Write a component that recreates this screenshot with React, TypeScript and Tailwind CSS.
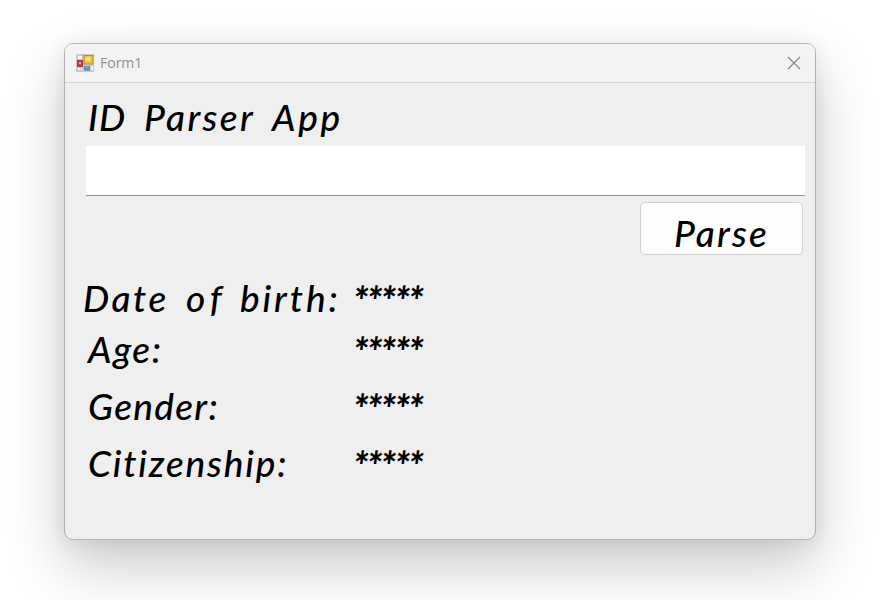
import React from 'react';

type Word = { text: string; style: string };
type Field = { words: Word[]; row: string };

const title: Word[] = [
  { text: 'ID', style: 'w-[56px] tracking-[1px]' },
  { text: 'Parser', style: 'w-[128px] tracking-[2.4px]' },
  { text: 'App', style: 'tracking-[2.6px]' },
];

const fields: Field[] = [
  {
    row: 'h-[51px]',
    words: [
      { text: 'Date', style: 'ml-[-5px] w-[103px] tracking-[2.6px]' },
      { text: 'of', style: 'w-[54px] tracking-[5px]' },
      { text: 'birth:', style: 'tracking-[2.9px]' },
    ],
  },
  { row: 'h-[57px]', words: [{ text: 'Age:', style: 'tracking-[1.6px]' }] },
  { row: 'h-[57px]', words: [{ text: 'Gender:', style: 'tracking-[1.3px]' }] },
  { row: 'h-[56px]', words: [{ text: 'Citizenship:', style: 'tracking-[1.8px]' }] },
];

function Words({ words }: { words: Word[] }) {
  return (
    <>
      {words.map(({ text, style }) => (
        <span key={text} className={`inline-block ${style}`}>{text}</span>
      ))}
    </>
  );
}

function FormIcon() {
  return (
    <svg width="18" height="18" viewBox="0 0 18 18" className="shrink-0">
      <rect width="18" height="18" rx="1" fill="#cbcbcb" />
      <path d="M2 2h4v3H2zM2 14h2v2H2zM5 14h1v2H5zM15 12h2v4h-2z" fill="#f5f5f5" />
      <rect x="1.5" y="6.5" width="5" height="6" fill="#c04a40" stroke="#a8352d" />
      <rect x="3" y="8" width="2" height="2" fill="#e5a39c" />
      <rect x="8" y="1.5" width="9" height="8.5" fill="#f0c23a" stroke="#b48f25" />
      <rect x="9.5" y="3" width="5" height="4" fill="#fbdc78" />
      <rect x="8" y="12" width="6" height="4.5" fill="#5183d6" />
      <rect x="9" y="12.5" width="4" height="2" fill="#7ba6ec" />
    </svg>
  );
}

function Star() {
  return <span className="inline-block w-[13.8px]">*</span>;
}

export default function App() {
  return (
    <div className="h-[600px] w-[893px] overflow-hidden bg-white pt-[43px] pl-[64px] font-['Lato',sans-serif] text-black">
      <main className="flex h-[497px] w-[752px] flex-col overflow-hidden rounded-[9px] border border-[#b2b2b2] bg-[#efefef] shadow-[0_26px_58px_rgba(0,0,0,0.21),0_2px_20px_rgba(0,0,0,0.08)]">
        <header className="flex h-[39px] shrink-0 items-center border-b border-[#d3d3d3] bg-[#f3f3f3] pr-[14px] pl-[11px]">
          <FormIcon />
          <span className="ml-[6px] flex-1 font-['Open_Sans',sans-serif] text-[14px] leading-[20px] text-[#8e8e8e]">Form1</span>
          <svg width="14" height="14" viewBox="0 0 14 14" fill="none" stroke="#858585" strokeWidth="1.1">
            <path d="M1 1l12 12M13 1L1 13" />
          </svg>
        </header>
        <div className="flex flex-col pr-[9px] pl-[21px]">
          <h1 className="flex h-[63px] items-start pt-[11px] pl-[2px] text-[37px] leading-[46px] font-medium whitespace-nowrap italic">
            <Words words={title} />
          </h1>
          <input aria-label="ID" className="h-[50px] w-[719px] border-b border-[#929292] bg-white px-2 outline-none" />
          <button className="mt-[6px] mr-[3px] h-[53px] w-[163px] self-end rounded-[5px] border border-[#d0d0d0] bg-[#fdfdfd] pt-[8px] text-[37px] leading-[42px] font-medium italic tracking-[2.2px]">
            Parse
          </button>
          <dl className="mt-[20px] pl-[2px]">
            {fields.map(({ words, row }) => (
              <div key={words[0].text} className={`flex items-start whitespace-nowrap ${row}`}>
                <dt className="w-[265px] text-[37px] leading-[46px] font-medium italic">
                  <Words words={words} />
                </dt>
                <dd className="pt-[3px] text-[39px] leading-[46px] font-black italic">
                  <Star /><Star /><Star /><Star /><Star />
                </dd>
              </div>
            ))}
          </dl>
        </div>
      </main>
    </div>
  );
}
